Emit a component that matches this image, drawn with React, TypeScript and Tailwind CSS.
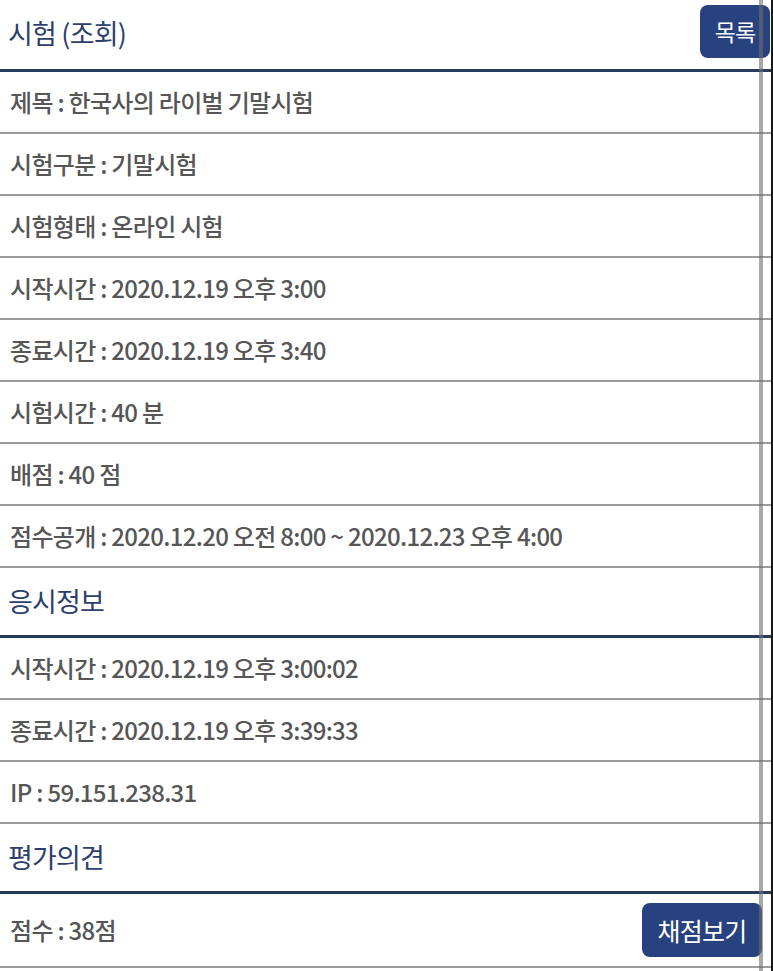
import React from "react";

const Header = ({ title }: { title: string }) => (
  <div className="flex h-[70px] items-center justify-between border-b-[3px] border-[#2a3c5e] pb-[3px] pl-[8px] pr-[3px]">
    <span className="text-[27px] leading-none tracking-[-0.8px] text-[#2d3f6c]">{title}</span>
  </div>
);

const Row = ({ children, tall }: { children: React.ReactNode; tall?: boolean }) => (
  <div
    className={`flex items-center justify-between border-b-2 border-[#9c9c9c] pl-[10px] pr-[11px] ${
      tall ? "h-[74px]" : "h-[62px]"
    }`}
  >
    {children}
  </div>
);

const Txt = ({ children }: { children: React.ReactNode }) => (
  <span className="text-[24px] font-medium leading-none tracking-[-0.7px] text-[#565656]">{children}</span>
);

export default function App() {
  const exam = [
    "제목 : 한국사의 라이벌 기말시험",
    "시험구분 : 기말시험",
    "시험형태 : 온라인 시험",
    "시작시간 : 2020.12.19 오후 3:00",
    "종료시간 : 2020.12.19 오후 3:40",
    "시험시간 : 40 분",
    "배점 : 40 점",
    "점수공개 : 2020.12.20 오전 8:00 ~ 2020.12.23 오후 4:00",
  ];
  const attend = [
    "시작시간 : 2020.12.19 오후 3:00:02",
    "종료시간 : 2020.12.19 오후 3:39:33",
    "IP : 59.151.238.31",
  ];
  return (
    <div
      className="relative h-[971px] w-[773px] overflow-hidden bg-white"
      style={{ fontFamily: '"Noto Sans CJK KR", "Noto Sans", sans-serif' }}
    >
      <div className="flex h-[72px] items-center justify-between border-b-[3px] border-[#2a3c5e] pl-[8px]">
        <span className="pb-[5px] text-[27px] leading-none tracking-[-0.8px] text-[#2d3f6c]">시험 (조회)</span>
        <button className="mb-[7px] mr-[3px] h-[53px] w-[70px] rounded-[8px] bg-[#27427e] text-[23px] leading-none tracking-[-0.8px] text-white">
          목록
        </button>
      </div>
      {exam.map((t) => (
        <Row key={t}>
          <Txt>{t}</Txt>
        </Row>
      ))}
      <Header title="응시정보" />
      {attend.map((t) => (
        <Row key={t}>
          <Txt>{t}</Txt>
        </Row>
      ))}
      <Header title="평가의견" />
      <Row tall>
        <Txt>점수 : 38점</Txt>
        <button className="h-[54px] w-[120px] rounded-[8px] bg-[#27427e] text-[25px] leading-none tracking-[-0.8px] text-white">
          채점보기
        </button>
      </Row>
      <div className="pointer-events-none absolute bottom-0 right-[10px] top-0 w-[4px] bg-[#6e6e6e]/60" />
      <div className="pointer-events-none absolute bottom-0 right-0 top-0 w-[2px] bg-[#1a1a1a]" />
    </div>
  );
}
